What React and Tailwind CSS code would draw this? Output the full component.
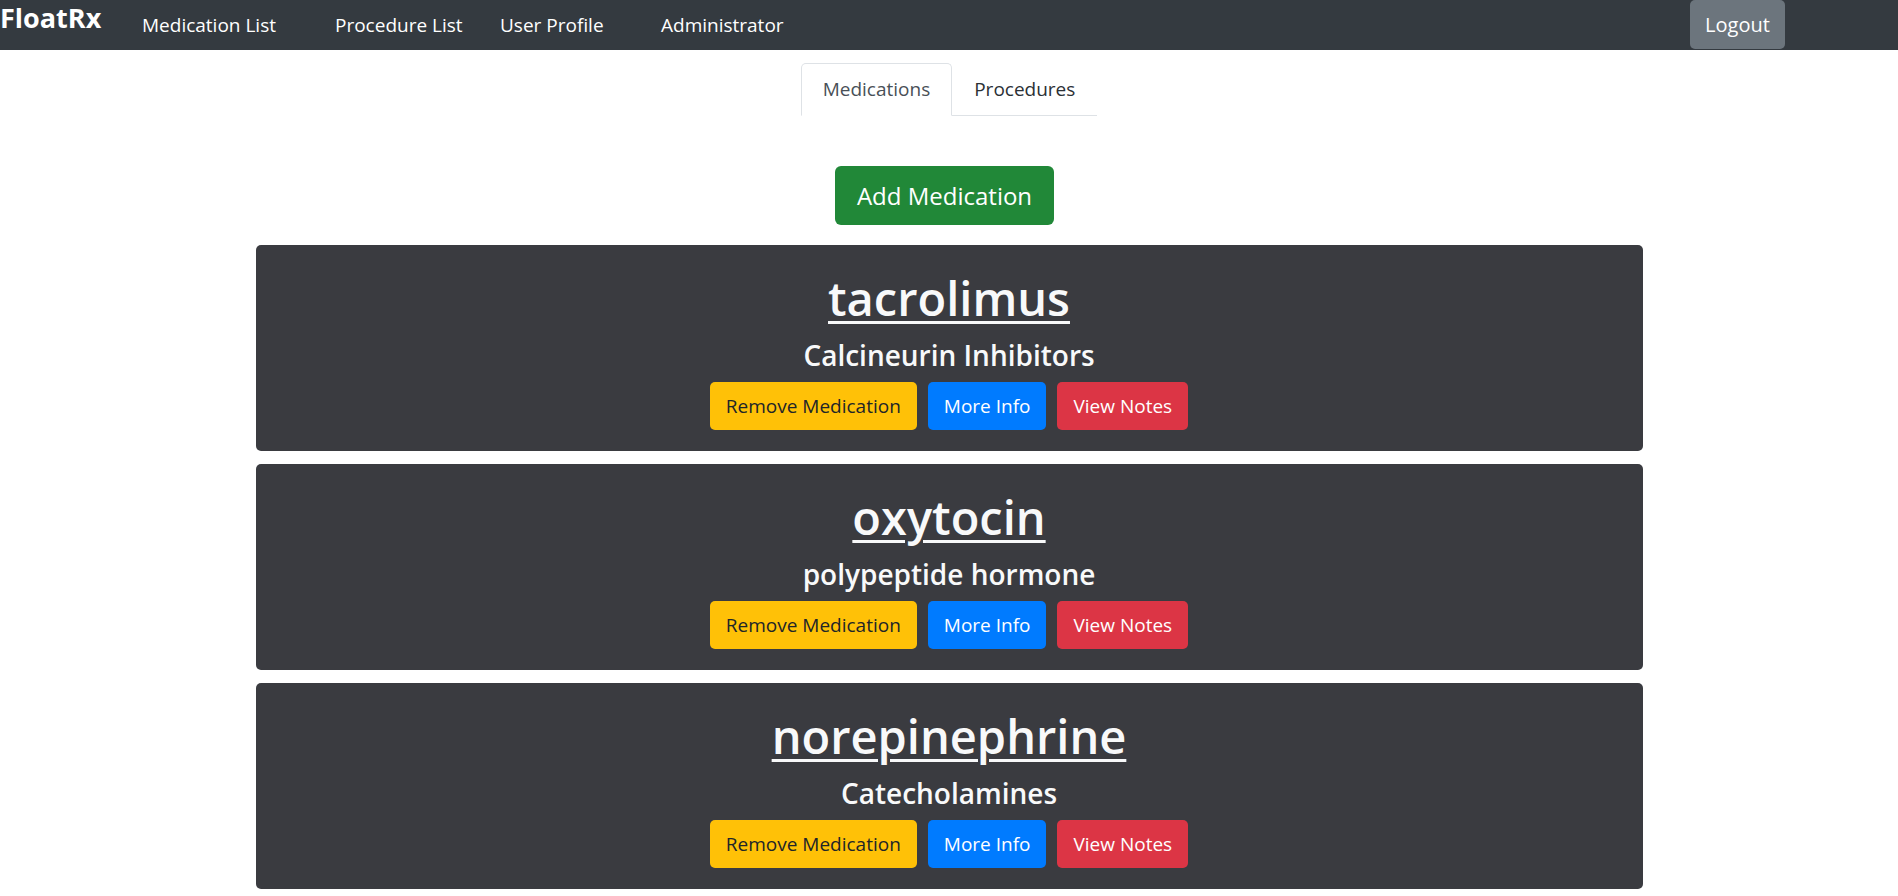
import React from "react";

const meds = [
  { name: "tacrolimus", cls: "Calcineurin Inhibitors" },
  { name: "oxytocin", cls: "polypeptide hormone" },
  { name: "norepinephrine", cls: "Catecholamines" },
];

function MedCard({ name, cls }) {
  return (
    <div className="bg-[#3a3b40] rounded-[5px] pt-[23px] pb-[21px] mb-[13px] flex flex-col items-center text-[#f8f9fa]">
      <a href="#" className="text-[47px] leading-[60px] font-semibold underline decoration-[3px] underline-offset-[5px] text-[#f8f9fa]">
        {name}
      </a>
      <h4 className="mt-[10px] text-[28px] leading-[34px] font-semibold">{cls}</h4>
      <div className="mt-[10px] flex gap-[11px]">
        <button className="bg-[#ffc107] text-[#212529] text-[19px] leading-[30px] px-[16px] py-[9px] rounded-[5px]">
          Remove Medication
        </button>
        <button className="bg-[#007bff] text-white text-[19px] leading-[30px] px-[16px] py-[9px] rounded-[5px]">
          More Info
        </button>
        <button className="bg-[#dc3545] text-white text-[19px] leading-[30px] px-[16px] py-[9px] rounded-[5px]">
          View Notes
        </button>
      </div>
    </div>
  );
}

export default function App() {
  return (
    <div className="min-h-screen bg-white font-['Open_Sans',sans-serif] text-[#212529]">
      <nav className="h-[50px] bg-[#343a40] flex items-start text-white">
        <div className="w-[142px] pt-[3px] text-[27px] leading-[30px] font-bold">FloatRx</div>
        <a href="#" className="w-[193px] pt-[10px] text-[19px] leading-[30px]">Medication List</a>
        <a href="#" className="w-[165px] pt-[10px] text-[19px] leading-[30px]">Procedure List</a>
        <a href="#" className="w-[161px] pt-[10px] text-[19px] leading-[30px]">User Profile</a>
        <a href="#" className="pt-[10px] text-[19px] leading-[30px]">Administrator</a>
        <button className="ml-auto mr-[113px] w-[95px] h-[49px] bg-[#6c757d] rounded-[5px] text-[20px] leading-[30px] text-white">
          Logout
        </button>
      </nav>

      <div className="flex justify-center mt-[13px]">
        <ul className="flex border-b border-[#dee2e6]">
          <li className="-mb-px border border-[#dee2e6] border-b-white rounded-t-[5px] bg-white px-[21px] py-[10px] text-[19px] leading-[31px] text-[#495057]">
            Medications
          </li>
          <li className="-mb-px border border-transparent px-[21px] py-[10px] text-[19px] leading-[31px] text-[#2b3035]">
            Procedures
          </li>
        </ul>
      </div>

      <div className="flex justify-center mt-[50px]">
        <button className="mr-[9px] bg-[#218838] text-white text-[24px] leading-[37px] px-[22px] py-[11px] rounded-[6px]">
          Add Medication
        </button>
      </div>

      <div className="w-[1387px] mx-auto mt-[20px]">
        {meds.map((m) => (
          <MedCard key={m.name} {...m} />
        ))}
      </div>
    </div>
  );
}
